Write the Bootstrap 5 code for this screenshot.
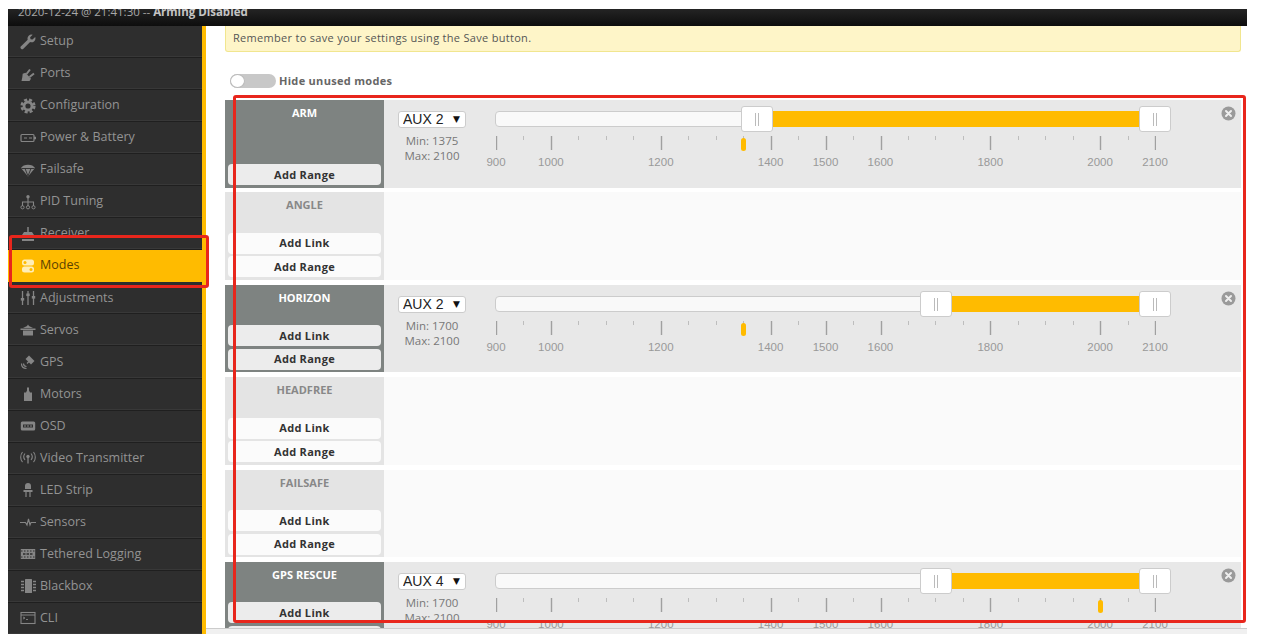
<!DOCTYPE html>
<html lang="en">
<head>
<meta charset="utf-8">
<title>Modes</title>
<link href="https://cdn.jsdelivr.net/npm/bootstrap@5.3.0/dist/css/bootstrap.min.css" rel="stylesheet">
<style>
html,body{height:644px;overflow:hidden;background:#fff}
body{font-family:"Open Sans",sans-serif;padding:9px 19px 0 8px;position:relative}
.shell{height:625px;display:flex;flex-direction:column}
.topstrip{height:17px;flex:none;background:linear-gradient(#242424,#0d0d0d);color:#a8a8a8;font-size:11.5px;line-height:6px;padding-left:10px;overflow:hidden;white-space:nowrap}
.topstrip b{color:#c4c4c4}
.mainrow{display:flex;flex:1;min-height:0}
.sidebar{width:198px;flex:none;background:#2e2e2e;border-right:4px solid #ffbb00;margin:0;padding:0;list-style:none;overflow:hidden}
.sidebar li{height:32.05px;display:flex;align-items:center;padding-left:12px;gap:4px;color:#939393;font-size:12.5px;border-bottom:1px solid #1f1f1f;box-shadow:inset 0 -1px 0 #383838}
.sidebar li.on{background:#ffbb00;color:#5b4200;border-bottom-color:#ffbb00;box-shadow:none}
.ic{width:16px;height:16px;flex:none;color:#858585;margin-right:0}
.on .ic{color:#ffeeb8}
.rightcol{flex:1;min-width:0;display:flex;flex-direction:column}
.content{flex:1;min-height:0;overflow:hidden;padding:0 6px 0 19px}
.notebar{height:26px;margin:0;padding:0 0 0 7px;display:flex;align-items:center;font-size:11px;letter-spacing:.3px;color:#555;background:#fef5c8;border:1px solid #f1e68f;border-top:0;border-radius:0 0 3px 3px}
.hidewrap{height:48px;display:flex;align-items:center;padding:10px 0 0 5px;gap:3px;font-size:11px;font-weight:700;color:#666;letter-spacing:.3px}
.pill{width:46px;height:14px;border-radius:7px;background:#c8c8c8;position:relative;flex:none}
.pill::after{content:"";position:absolute;left:0;top:0;width:15px;height:14px;border-radius:50%;background:#fff;border:1px solid #bbb}
.moderow{display:flex;height:87.5px;margin-bottom:4.9px}
.namepane{width:159px;flex:none;display:flex;flex-direction:column;padding:0 3px;background:#e4e4e4}
.modename{flex:1;text-align:center;font-size:11px;font-weight:700;color:#888;padding-top:5px;line-height:15px}
.active .namepane{background:#7e8381}
.active .modename{color:#fff}
.addbtn{height:21px;margin-bottom:2.5px;padding:0;font-size:11px;font-weight:700;line-height:20px;color:#333;background:#fbfbfb;border:0;border-radius:4px;letter-spacing:.3px}
.active .addbtn{background:#ececec}
.rangepane{flex:1;min-width:0;background:#fafafa;position:relative}
.active .rangepane{background:#e8e8e8;display:flex;padding-left:14px}
.ctlcol{width:68px;flex:none;text-align:center;padding-top:11px;font-size:11.5px;line-height:15px;color:#777}
.selwrap{position:relative;height:17px;margin-bottom:5px}
.auxsel{appearance:none;width:100%;height:17px;display:block;background:#fff;border:1px solid #ccc;border-radius:3px;padding:0 0 0 4px;font:14px/15px "Liberation Sans",sans-serif;color:#222}
.seltri{position:absolute;right:6px;top:3px;font:9px/11px "DejaVu Sans",sans-serif;color:#111;pointer-events:none}
.slidecol{width:659px;flex:none;margin-left:30px;position:relative}
.track{position:relative;height:16px;margin:11px 0 0 -1px;background:#f9f9f9;border:1px solid #ccc;border-radius:4px}
.fill{position:absolute;top:-1px;bottom:-1px;right:-1px;background:#ffbb00}
.grip{position:absolute;top:-6px;width:32px;height:26px;margin-left:-15px;background:#fff;border:1px solid #ccc;border-radius:3px;z-index:2}
.grip::after{content:"";position:absolute;left:13px;top:6px;width:4px;height:13px;border-left:1px solid #bbb;border-right:1px solid #bbb}
.scalesvg{display:block;margin-top:9px;overflow:visible}
.ptr{position:absolute;top:38px;width:5px;height:13px;margin-left:-2.5px;border-radius:3px;background:#ffbb00}
.labels{position:relative;height:15px;margin-top:5px;font:11.5px/15px "Liberation Sans",sans-serif;color:#999}
.labels span{position:absolute;transform:translateX(-50%)}
.closer{position:absolute;top:6px;right:5px;width:15px;height:15px}
.bottomline{height:6px;flex:none;background:#f0f0f0;border-top:1px solid #ccc}
.redbox{position:absolute;border:3px solid #e8261c;border-radius:3px;pointer-events:none;z-index:5}
.redmain{left:233px;top:95px;width:1013px;height:528px}
.redside{left:9px;top:235px;width:200px;height:53px}
</style>
</head>
<body>
<svg width="0" height="0" class="position-absolute">
  <symbol id="ticks" viewBox="0 0 660 14">
    <path d="M.5 0v14M55.5 0v14M165.5 0v14M275.5 0v14M330.5 0v14M385.5 0v14M494.5 0v14M604.5 0v14M659.5 0v14" stroke="#a0a0a0" stroke-width="1.4" fill="none"/>
    <path d="M27.5 0v4M82.5 0v4M110.5 0v4M137.5 0v4M192.5 0v4M220.5 0v4M247.5 0v4M302.5 0v4M357.5 0v4M412.5 0v4M439.5 0v4M467.5 0v4M522.5 0v4M549.5 0v4M577.5 0v4M632.5 0v4" stroke="#bdbdbd" stroke-width="1" fill="none"/>
  </symbol>
  <symbol id="xdot" viewBox="0 0 15 15">
    <circle cx="7.5" cy="7.5" r="7" fill="#9a9a9a"/>
    <path d="M5 5l5 5M10 5l-5 5" stroke="#eee" stroke-width="2" stroke-linecap="round"/>
  </symbol>
</svg>
<div class="shell">
  <div class="topstrip">2020-12-24 @ 21:41:30 -- <b>Arming Disabled</b></div>
  <div class="mainrow">
    <ul class="sidebar">
      <li><svg class="ic" viewBox="0 0 16 16"><path fill="currentColor" d="M15.2 3l-2.7 2.6-1.9-.4-.5-1.9L12.700 .7a4 4 0 0 0-5 5L1 12.300a1.600 1.600 0 0 0 2.400 2.400l6.700-6.600a4 4 0 0 0 5.100-5.100z"/></svg>Setup</li>
      <li><svg class="ic" viewBox="0 0 16 16"><path fill="currentColor" d="M1.500 15h8l1.500-2.300-5.500-6-2.800 1-.4 3.500z"/><path d="M6.500 8l3.500-4.500M9.500 11l4.500-3.500" stroke="currentColor" stroke-width="2" fill="none"/></svg>Ports</li>
      <li><svg class="ic" viewBox="0 0 16 16"><circle cx="8" cy="8" r="6.300" fill="none" stroke="currentColor" stroke-width="2.600" stroke-dasharray="3 2"/><circle cx="8" cy="8" r="4" fill="none" stroke="currentColor" stroke-width="2.800"/></svg>Configuration</li>
      <li><svg class="ic" viewBox="0 0 16 16"><rect x="1" y="4.500" width="13" height="7" rx="1" fill="none" stroke="currentColor" stroke-width="1.200"/><path d="M14.500 7h1v2h-1zM4 8h3M9 8h3" stroke="currentColor" fill="none"/></svg>Power &amp; Battery</li>
      <li><svg class="ic" viewBox="0 0 16 16"><path fill="currentColor" d="M1 6c2-4.500 12-4.500 14 0l-7 8.500z"/><path d="M1.500 6.500h13M5 6.500l3 7.500 3-7.500" stroke="#2e2e2e" fill="none" stroke-width=".9"/></svg>Failsafe</li>
      <li><svg class="ic" viewBox="0 0 16 16"><path fill="none" stroke="currentColor" stroke-width="1.100" d="M8 4v8M2.500 12V8h11v4"/><circle cx="8" cy="2.800" r="1.700" fill="currentColor"/><circle cx="2.500" cy="13.300" r="1.600" fill="none" stroke="currentColor"/><circle cx="8" cy="13.300" r="1.600" fill="none" stroke="currentColor"/><circle cx="13.500" cy="13.300" r="1.600" fill="none" stroke="currentColor"/></svg>PID Tuning</li>
      <li><svg class="ic" viewBox="0 0 16 16"><path d="M8 1v5" stroke="currentColor" stroke-width="1.500"/><path fill="currentColor" d="M4 6h8l2 3v3H2V9zM2 13h12v2H2z"/></svg>Receiver</li>
      <li class="on"><svg class="ic" viewBox="0 0 16 16"><rect x="2" y="1.500" width="12" height="6" rx="2.500" fill="currentColor"/><rect x="2" y="8.500" width="12" height="6" rx="2.500" fill="currentColor"/><circle cx="5" cy="4.500" r="1.500" fill="#ffbb00"/><circle cx="11" cy="11.500" r="1.500" fill="#ffbb00"/></svg>Modes</li>
      <li><svg class="ic" viewBox="0 0 16 16"><path d="M2.500 1v14M8 1v14M13.500 1v14" stroke="currentColor" stroke-width="1.300"/><rect x=".8" y="8" width="3.400" height="2.600" fill="currentColor"/><rect x="6.300" y="3.500" width="3.400" height="2.600" fill="currentColor"/><rect x="11.800" y="6" width="3.400" height="2.600" fill="currentColor"/></svg>Adjustments</li>
      <li><svg class="ic" viewBox="0 0 16 16"><path fill="currentColor" d="M8 2.500l1 1.500 4 2H3l4-2zM.5 6.500h15v1.500h-15zM3 8.500h10v5H3z"/></svg>Servos</li>
      <li><svg class="ic" viewBox="0 0 16 16"><path fill="currentColor" d="M9 1.500l5.500 5.500-3.500 3.500L5.500 5z"/><path d="M7 9.500l2-2M1.500 9.500c0 3 2 5 5 5M3.500 9.500c0 2 1 3 3 3" stroke="currentColor" stroke-width="1.200" fill="none"/></svg>GPS</li>
      <li><svg class="ic" viewBox="0 0 16 16"><path fill="currentColor" d="M7 1.500h2v3l1 2h2V15H4V6.500h2l1-2z"/></svg>Motors</li>
      <li><svg class="ic" viewBox="0 0 16 16"><rect x=".8" y="3.500" width="14.400" height="9" rx="1.500" fill="currentColor"/><path d="M3 6.500h10v3H3z" fill="#2e2e2e"/><path d="M4 8h2M7 8h2M10 8h2" stroke="currentColor"/></svg>OSD</li>
      <li><svg class="ic" viewBox="0 0 16 16"><circle cx="8" cy="6.500" r="1.700" fill="currentColor"/><path d="M8 8v5.500" stroke="currentColor" stroke-width="1.300"/><path d="M5 3.500c-1.600 2-1.600 4.500 0 6.500M11 3.500c1.600 2 1.600 4.500 0 6.500M2.500 2c-2.400 3-2.400 7.500 0 10M13.500 2c2.400 3 2.400 7.500 0 10" stroke="currentColor" fill="none" stroke-width="1.100"/></svg>Video Transmitter</li>
      <li><svg class="ic" viewBox="0 0 16 16"><path fill="currentColor" d="M5 7V4a3 3 0 0 1 6 0v3zM3.500 8h9v2h-9z"/><path d="M6 10v5M10 10v5" stroke="currentColor" stroke-width="1.200"/></svg>LED Strip</li>
      <li><svg class="ic" viewBox="0 0 16 16"><path d="M0 8.500h5.500l1.500 2.500 1.500-6 1.500 6 1-2.500H16" stroke="currentColor" stroke-width="1.100" fill="none"/></svg>Sensors</li>
      <li><svg class="ic" viewBox="0 0 16 16"><rect x=".8" y="3" width="14.400" height="10" fill="currentColor"/><path d="M1 5h14M1 11h14" stroke="#2e2e2e" stroke-dasharray="1.500 1.500"/><path d="M3 8h10" stroke="#2e2e2e" stroke-width="1.500" stroke-dasharray="2.500 1"/></svg>Tethered Logging</li>
      <li><svg class="ic" viewBox="0 0 16 16"><rect x="5" y="1" width="7" height="14" rx=".6" fill="currentColor"/><path d="M1 3.500h3M1 6.500h3M1 9.500h3M1 12.500h3M13 3.500h3M13 6.500h3M13 9.500h3M13 12.500h3" stroke="currentColor" stroke-width="1.300"/></svg>Blackbox</li>
      <li><svg class="ic" viewBox="0 0 16 16"><rect x="1" y="2.500" width="14" height="11" fill="none" stroke="currentColor" stroke-width="1.100"/><path d="M1 5h14" stroke="currentColor"/><path d="M3 7l2 1-2 1M6 9.500h2" stroke="currentColor" fill="none" stroke-width=".9"/></svg>CLI</li>
    </ul>
    <div class="rightcol">
      <div class="content">
        <div class="notebar alert alert-warning">Remember to save your settings using the Save button.</div>
        <div class="hidewrap"><span class="pill"></span><span>Hide unused modes</span></div>

        <div class="moderow active">
          <div class="namepane"><div class="modename">ARM</div><button class="btn addbtn">Add Range</button></div>
          <div class="rangepane">
            <div class="ctlcol"><div class="selwrap"><select class="auxsel"><option>AUX 2</option></select><span class="seltri">▼</span></div>Min: 1375<br>Max: 2100</div>
            <div class="slidecol">
              <div class="track"><div class="fill" style="left:39.58%"></div><div class="grip" style="left:39.58%"></div><div class="grip" style="left:100%"></div></div>
              <svg class="scalesvg" width="660" height="14"><use href="#ticks"/></svg>
              <span class="ptr" style="left:37.5%"></span>
              <div class="labels"><span style="left:0">900</span><span style="left:8.33%">1000</span><span style="left:25%">1200</span><span style="left:41.67%">1400</span><span style="left:50%">1500</span><span style="left:58.33%">1600</span><span style="left:75%">1800</span><span style="left:91.67%">2000</span><span style="left:100%">2100</span></div>
            </div>
            <svg class="closer"><use href="#xdot"/></svg>
          </div>
        </div>

        <div class="moderow">
          <div class="namepane"><div class="modename">ANGLE</div><button class="btn addbtn">Add Link</button><button class="btn addbtn">Add Range</button></div>
          <div class="rangepane"></div>
        </div>

        <div class="moderow active">
          <div class="namepane"><div class="modename">HORIZON</div><button class="btn addbtn">Add Link</button><button class="btn addbtn">Add Range</button></div>
          <div class="rangepane">
            <div class="ctlcol"><div class="selwrap"><select class="auxsel"><option>AUX 2</option></select><span class="seltri">▼</span></div>Min: 1700<br>Max: 2100</div>
            <div class="slidecol">
              <div class="track"><div class="fill" style="left:66.67%"></div><div class="grip" style="left:66.67%"></div><div class="grip" style="left:100%"></div></div>
              <svg class="scalesvg" width="660" height="14"><use href="#ticks"/></svg>
              <span class="ptr" style="left:37.5%"></span>
              <div class="labels"><span style="left:0">900</span><span style="left:8.33%">1000</span><span style="left:25%">1200</span><span style="left:41.67%">1400</span><span style="left:50%">1500</span><span style="left:58.33%">1600</span><span style="left:75%">1800</span><span style="left:91.67%">2000</span><span style="left:100%">2100</span></div>
            </div>
            <svg class="closer"><use href="#xdot"/></svg>
          </div>
        </div>

        <div class="moderow">
          <div class="namepane"><div class="modename">HEADFREE</div><button class="btn addbtn">Add Link</button><button class="btn addbtn">Add Range</button></div>
          <div class="rangepane"></div>
        </div>

        <div class="moderow">
          <div class="namepane"><div class="modename">FAILSAFE</div><button class="btn addbtn">Add Link</button><button class="btn addbtn">Add Range</button></div>
          <div class="rangepane"></div>
        </div>

        <div class="moderow active">
          <div class="namepane"><div class="modename">GPS RESCUE</div><button class="btn addbtn">Add Link</button><button class="btn addbtn">Add Range</button></div>
          <div class="rangepane">
            <div class="ctlcol"><div class="selwrap"><select class="auxsel"><option>AUX 4</option></select><span class="seltri">▼</span></div>Min: 1700<br>Max: 2100</div>
            <div class="slidecol">
              <div class="track"><div class="fill" style="left:66.67%"></div><div class="grip" style="left:66.67%"></div><div class="grip" style="left:100%"></div></div>
              <svg class="scalesvg" width="660" height="14"><use href="#ticks"/></svg>
              <span class="ptr" style="left:91.67%"></span>
              <div class="labels"><span style="left:0">900</span><span style="left:8.33%">1000</span><span style="left:25%">1200</span><span style="left:41.67%">1400</span><span style="left:50%">1500</span><span style="left:58.33%">1600</span><span style="left:75%">1800</span><span style="left:91.67%">2000</span><span style="left:100%">2100</span></div>
            </div>
            <svg class="closer"><use href="#xdot"/></svg>
          </div>
        </div>
      </div>
      <div class="bottomline"></div>
    </div>
  </div>
</div>
<div class="redbox redmain"></div>
<div class="redbox redside"></div>
<script src="https://cdn.jsdelivr.net/npm/bootstrap@5.3.0/dist/js/bootstrap.bundle.min.js"></script>
</body>
</html>
